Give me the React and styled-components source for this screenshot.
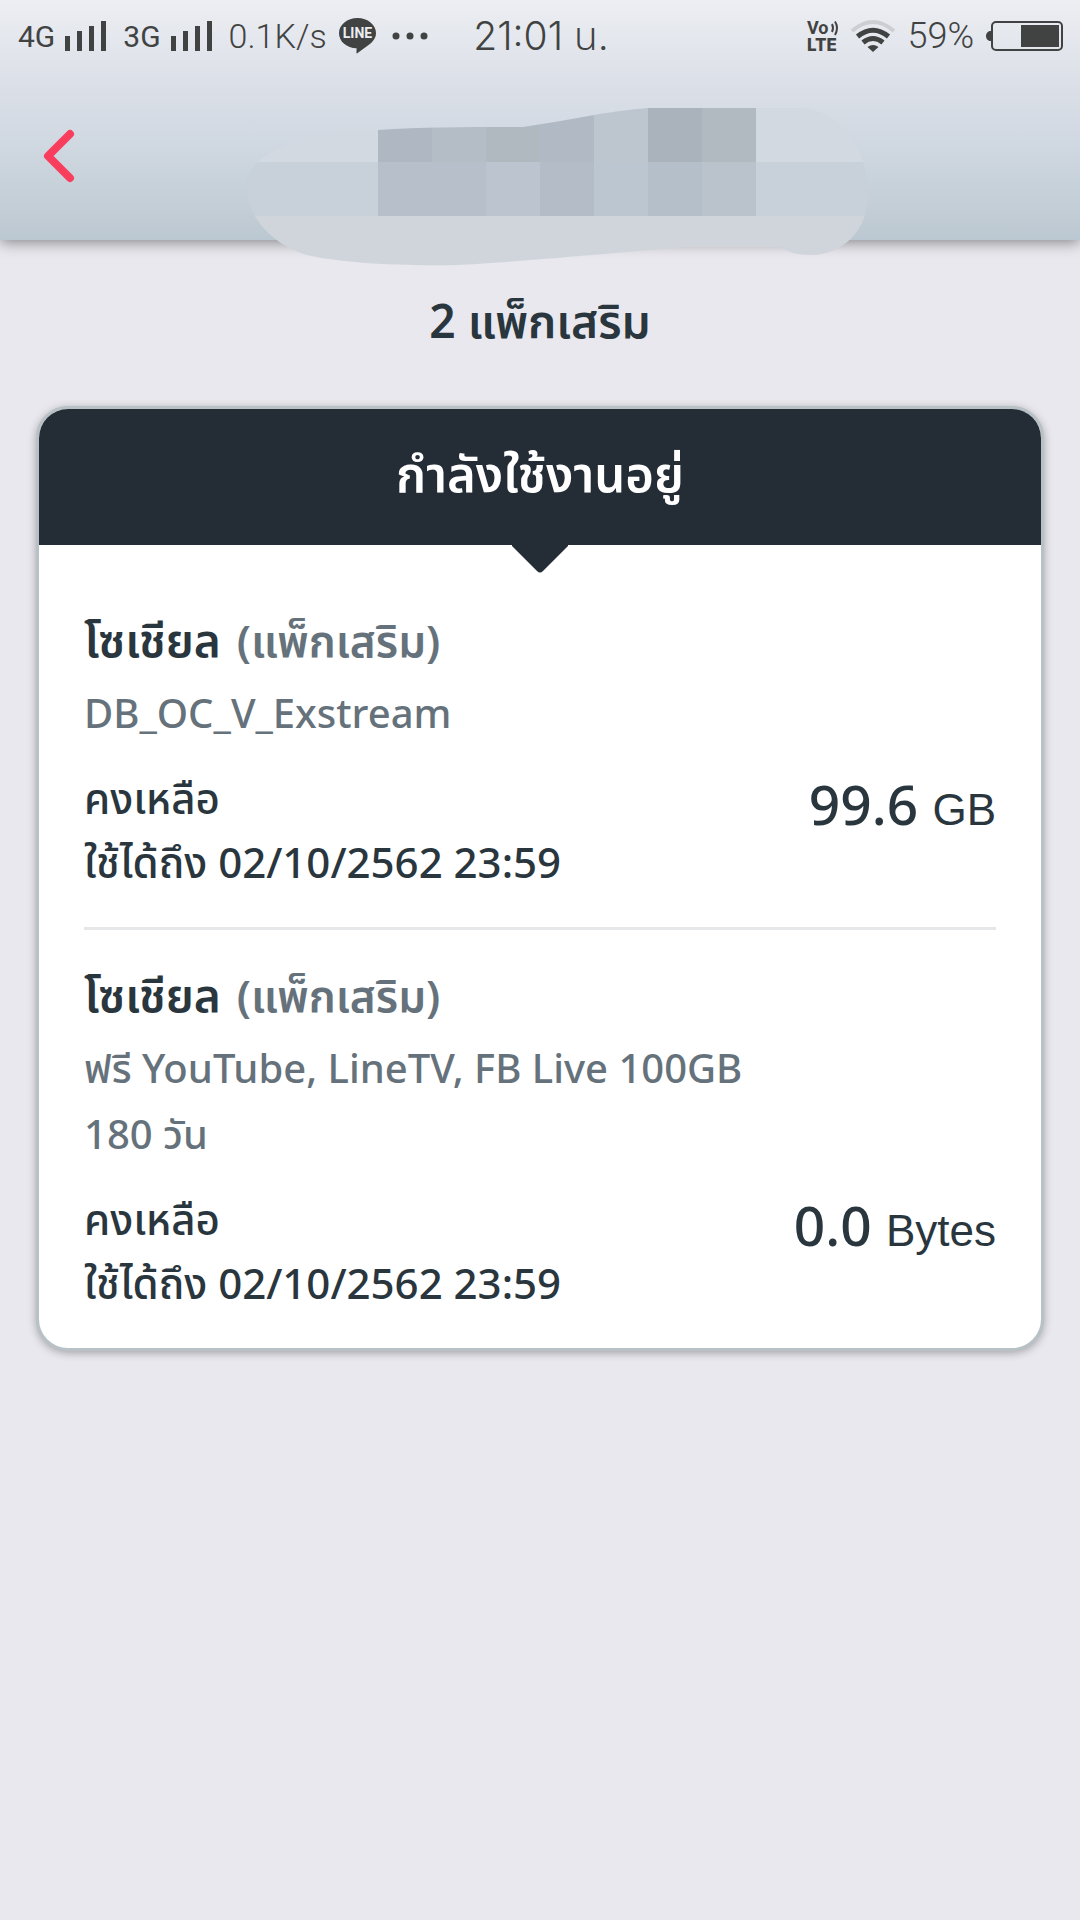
import styled, { createGlobalStyle } from "styled-components";

const GlobalStyle = createGlobalStyle`
    * {
        box-sizing: border-box;
    }

    body {
        margin: 0;
        background-color: #e9e8ee;
        color: #2a363e;
        font-family: "Noto Sans", "Noto Sans Thai", sans-serif;
    }
`

const Header = styled.header`
    position: relative;
    background: linear-gradient(#eceef2, #dce0e8 34%, #cdd6df 66%, #bcc8d1);
    box-shadow: 0 2px 14px rgba(0, 0, 0, 0.45);
`

const StatusBar = styled.div`
    display: grid;
    grid-template-columns: 1fr auto 1fr;
    align-items: center;
    height: 72px;
    padding: 0 16px 0 18px;
    color: #414342;
    font-family: Roboto, sans-serif;
`

const StatusGroup = styled.div`
    display: flex;
    align-items: center;
    justify-content: ${props => props.$end ? 'flex-end' : 'flex-start'};
    gap: 12px;
`

const Signal = styled.span`
    display: flex;
    align-items: center;
    gap: 10px;
    margin-right: 4px;
    font-size: 30px;
`

const StatusText = styled.span`
    font-size: ${props => props.$large ? '36px' : '34px'};
    font-weight: 300;
`

const Time = styled.time`
    padding-top: 4px;
    font-family: Inter, "Noto Sans Thai", sans-serif;
    font-size: 39px;
    font-weight: 300;
`

const Icon = styled.svg`
    display: block;
    flex: none;
    overflow: visible;
`

const NavBar = styled.nav`
    display: flex;
    align-items: center;
    height: 168px;
    padding: 0 28px 0 32px;
`

const BackButton = styled.button`
    display: flex;
    padding: 8px;
    border: 0;
    background: none;
    cursor: pointer;
`

/* sits over the bottom edge of the header */
const HiddenNumber = styled.svg`
    position: absolute;
    top: 107px;
    left: 50%;
    margin-left: -294px;
`

const Main = styled.main`
    padding: 46px 36px;
`

const PageTitle = styled.h1`
    margin: 0 0 52px;
    font-size: 46px;
    font-weight: 600;
    line-height: 68px;
    text-align: center;
`

const Card = styled.section`
    overflow: hidden;
    border: 3px solid #b7c1c6;
    border-radius: 32px;
    background-color: #fefffe;
    box-shadow: 0 2px 8px rgba(0, 0, 0, 0.3);
`

const CardHeader = styled.h2`
    position: relative;
    margin: 0;
    padding: 28px 20px 36px;
    background-color: #242c35;
    color: #fff;
    font-size: 49px;
    font-weight: 600;
    line-height: 72px;
    text-align: center;
`

const Pointer = styled.svg`
    position: absolute;
    top: 100%;
    left: 50%;
    margin: -1px 0 0 -28px;
`

const PackList = styled.ul`
    margin: 0;
    padding: 30px 45px 0;
    list-style: none;
`

const PackItem = styled.li`
    padding: 30px 0 33px;

    & + & {
        border-top: 3px solid #e6e7e9;
    }
`

const PackTitle = styled.h3`
    margin: 0 0 6px;
    font-size: 46px;
    font-weight: 600;
    line-height: 68px;
`

const PackType = styled.span`
    margin-left: 4px;
    color: #66727b;
    font-size: 44px;
`

const PackName = styled.p`
    max-width: 78%;
    margin: 0 0 20px;
    color: #66727b;
    font-size: 40px;
    font-weight: 500;
    line-height: 66px;
`

const Usage = styled.div`
    display: flex;
    justify-content: space-between;
    font-size: 42px;
    font-weight: 500;
    line-height: 64px;
`

const Remaining = styled.strong`
    padding-top: 6px;
    font-size: 55px;
    font-weight: 500;
`

const Unit = styled.span`
    font-family: "Liberation Sans", sans-serif;
    font-size: 44px;
    font-weight: 400;
`

const packs = [
    {
        id: 1,
        title: 'โซเชียล',
        name: 'DB_OC_V_Exstream',
        amount: '99.6',
        unit: 'GB',
        expires: '02/10/2562 23:59'
    },
    {
        id: 2,
        title: 'โซเชียล',
        name: 'ฟรี YouTube, LineTV, FB Live 100GB 180 วัน',
        amount: '0.0',
        unit: 'Bytes',
        expires: '02/10/2562 23:59'
    }
]

function SignalBars() {
    return (
        <Icon width="42" height="30" viewBox="0 0 42 30" fill="#414342" aria-hidden="true">
            <rect x="0" y="15" width="5" height="15" />
            <rect x="12" y="10" width="5" height="20" />
            <rect x="24" y="5" width="5" height="25" />
            <rect x="36" y="0" width="5" height="30" />
        </Icon>
    )
}

function LineIcon() {
    return (
        <Icon width="37" height="36" viewBox="0 0 37 36" aria-hidden="true">
            <path d="M18.500 0C28.700 0 37 6.700 37 15.200C37 22 31 26 25.500 30C22.500 32.200 20 34 18 35.500C17 35.500 17.800 32 17.500 30.300C7.800 29.800 0 23.700 0 15.200C0 6.700 8.300 0 18.500 0Z" fill="#414342" />
            <text x="18.500" y="20" fill="#eceef2" fontFamily="Roboto" fontSize="14" fontWeight="700" textAnchor="middle">LINE</text>
        </Icon>
    )
}

function DotsIcon() {
    return (
        <Icon width="40" height="8" viewBox="-4 0 40 8" fill="#414342" aria-hidden="true">
            <circle cx="4" cy="4" r="3.500" />
            <circle cx="18" cy="4" r="3.500" />
            <circle cx="32" cy="4" r="3.500" />
        </Icon>
    )
}

function VolteIcon() {
    return (
        <Icon width="32" height="32" viewBox="0 0 32 32" fill="#414342" aria-hidden="true">
            <text x="0" y="14" fontFamily="Roboto" fontSize="18" fontWeight="700">Vo</text>
            <text x="0" y="31" fontFamily="Inter" fontSize="17" fontWeight="800">LTE</text>
            <path d="M25 4Q27 8 25 12M28 1.500Q32 8 28 15" fill="none" stroke="#414342" strokeWidth="2" />
        </Icon>
    )
}

function WifiIcon() {
    return (
        <Icon width="44" height="33" viewBox="0 0 44 33" fill="none" stroke="#414342" strokeWidth="4" aria-hidden="true">
            <path d="M1 11Q22 -7 43 11" stroke="#cdced2" />
            <path d="M6.500 16.500Q22 4 37.500 16.500" strokeWidth="5" />
            <path d="M12 22.500Q22 14.500 32 22.500" strokeWidth="5" />
            <path d="M16.500 27Q22 23 27.500 27L22 32Z" fill="#414342" stroke="none" />
        </Icon>
    )
}

function BatteryIcon() {
    return (
        <Icon width="78" height="30" viewBox="0 0 78 30" aria-hidden="true">
            <path d="M5 10C2 10 0 12 0 15C0 18 2 20 5 20Z" fill="#414342" />
            <rect x="6" y="1" width="70" height="28" rx="4" fill="none" stroke="#414342" strokeWidth="2" />
            <rect x="35" y="4" width="38" height="22" fill="#414342" />
        </Icon>
    )
}

function NumberMask() {
    return (
        <HiddenNumber width="624" height="160" viewBox="0 0 624 160" aria-hidden="true">
            <clipPath id="brush">
                <path d="M55 34C80 24 105 24 132 23C180 20 225 20 277 20C320 14 360 4 402 1H556C594 4 622 40 622 88C622 124 596 148 565 148C550 148 543 145 534 140H438C380 145 260 156 210 158C150 159 100 156 65 149C28 140 0 110 0 78C2 56 24 42 55 34Z" />
            </clipPath>
            <g clipPath="url(#brush)" shapeRendering="crispEdges">
                <rect width="624" height="55" fill="#d2d9e1" />
                <rect y="55" width="624" height="54" fill="#c8d0da" />
                <rect y="109" width="624" height="51" fill="#d0d5dc" />
                <rect x="132" width="54" height="55" fill="#afb8c2" />
                <rect x="186" width="54" height="55" fill="#b4bdc5" />
                <rect x="240" width="54" height="55" fill="#b0b8c0" />
                <rect x="294" width="54" height="55" fill="#b1bac4" />
                <rect x="348" width="54" height="55" fill="#bdc5ce" />
                <rect x="402" width="54" height="55" fill="#aab2bc" />
                <rect x="456" width="54" height="55" fill="#b1b9c1" />
                <rect x="132" y="55" width="108" height="54" fill="#b7c0ca" />
                <rect x="240" y="55" width="54" height="54" fill="#bcc4d0" />
                <rect x="294" y="55" width="54" height="54" fill="#b4bdc7" />
                <rect x="348" y="55" width="54" height="54" fill="#bcc6d0" />
                <rect x="402" y="55" width="54" height="54" fill="#b5bfc9" />
                <rect x="456" y="55" width="54" height="54" fill="#bac2cc" />
            </g>
        </HiddenNumber>
    )
}

function Pack({ title, name, amount, unit, expires }) {
    return (
        <PackItem>
            <PackTitle>{title} <PackType>(แพ็กเสริม)</PackType></PackTitle>
            <PackName>{name}</PackName>
            <Usage>
                <div>
                    <div>คงเหลือ</div>
                    <div>ใช้ได้ถึง <time>{expires}</time></div>
                </div>
                <Remaining>{amount} <Unit>{unit}</Unit></Remaining>
            </Usage>
        </PackItem>
    )
}

function App() {
    return (
        <>
            <GlobalStyle />
            <Header>
                <StatusBar>
                    <StatusGroup>
                        <Signal>4G <SignalBars /></Signal>
                        <Signal>3G <SignalBars /></Signal>
                        <StatusText>0.1K/s</StatusText>
                        <LineIcon />
                        <DotsIcon />
                    </StatusGroup>
                    <Time>21:01 น.</Time>
                    <StatusGroup $end>
                        <VolteIcon />
                        <WifiIcon />
                        <StatusText $large>59%</StatusText>
                        <BatteryIcon />
                    </StatusGroup>
                </StatusBar>
                <NavBar>
                    <BackButton aria-label="ย้อนกลับ">
                        <Icon width="38" height="54" viewBox="0 0 38 54" fill="none" stroke="#f93e5d" strokeWidth="8" strokeLinecap="round" strokeLinejoin="round">
                            <path d="M30 5L8 27L30 49" />
                        </Icon>
                    </BackButton>
                </NavBar>
                <NumberMask />
            </Header>
            <Main>
                <PageTitle>2 แพ็กเสริม</PageTitle>
                <Card>
                    <CardHeader>
                        กำลังใช้งานอยู่
                        <Pointer width="56" height="29" viewBox="0 0 56 29" fill="#242c35" aria-hidden="true">
                            <path d="M0 0H56V2L31 27Q28 30 25 27L0 2Z" />
                        </Pointer>
                    </CardHeader>
                    <PackList>
                        {packs.map(pack => <Pack key={pack.id} {...pack} />)}
                    </PackList>
                </Card>
            </Main>
        </>
    )
}

export default App
